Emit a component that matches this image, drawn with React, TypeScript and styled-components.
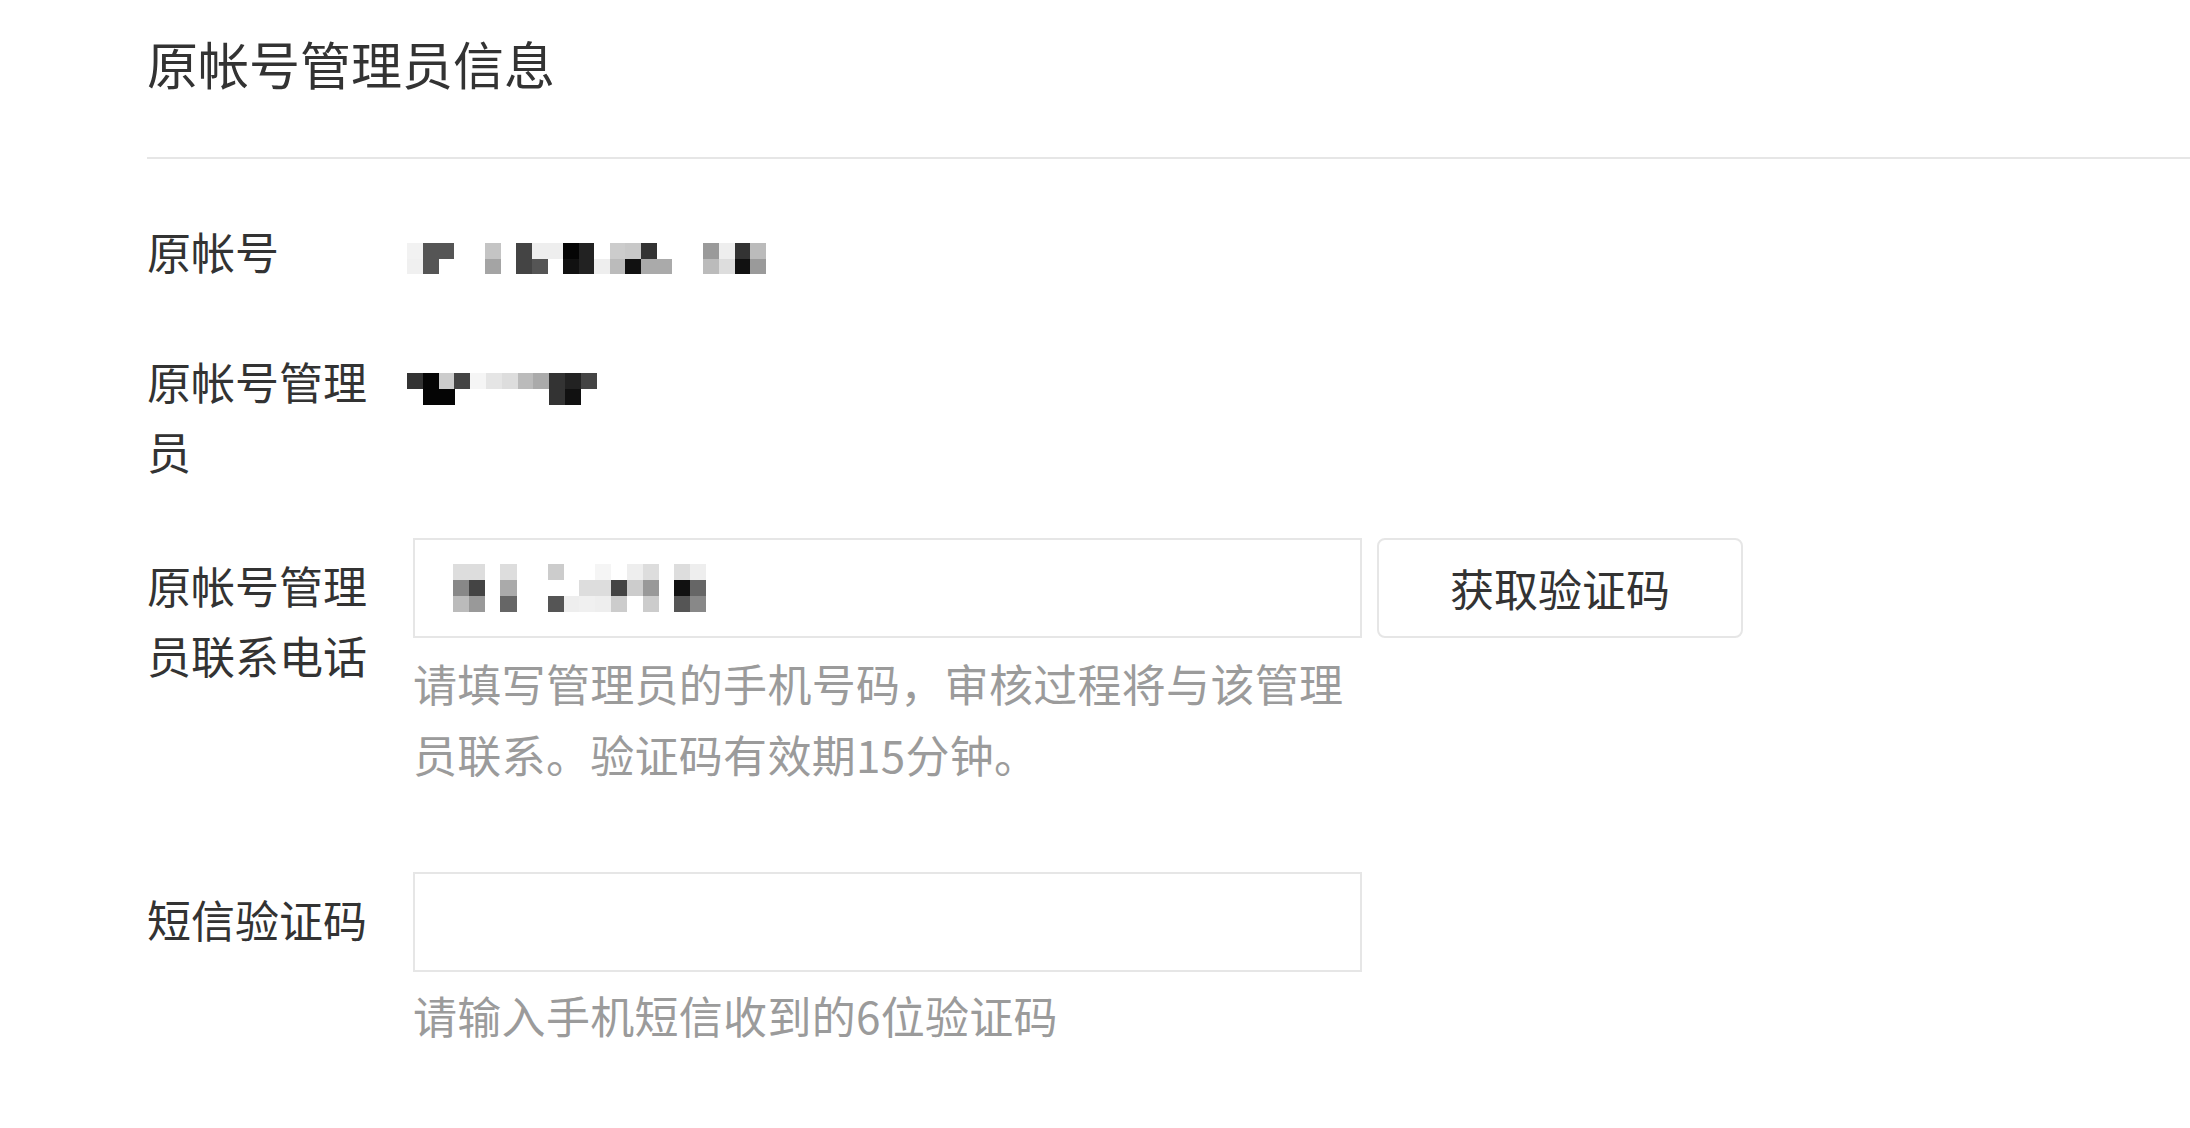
import React from "react";
import styled, { createGlobalStyle } from "styled-components";

const GlobalStyle = createGlobalStyle`
  html, body {
    margin: 0;
    padding: 0;
    background: #ffffff;
  }
  body {
    font-family: "Noto Sans CJK SC", "Noto Sans", sans-serif;
    color: #333333;
  }
`;

const Page = styled.div`
  width: 2190px;
  min-height: 1128px;
  background: #ffffff;
`;

const Header = styled.header`
  margin-left: 147px;
  padding: 38px 0 69px;
  border-bottom: 2px solid #e6e6e6;
`;

const Title = styled.h1`
  margin: 0;
  font-size: 51px;
  line-height: 50px;
  font-weight: 400;
  color: #333333;
`;

const Form = styled.div`
  padding-left: 147px;
`;

const Row = styled.div<{ $mt: number }>`
  display: flex;
  align-items: flex-start;
  margin-top: ${(p) => p.$mt}px;
`;

const Label = styled.div<{ $pt?: number }>`
  flex: none;
  width: 250px;
  margin-right: 16px;
  padding-top: ${(p) => p.$pt ?? 0}px;
  font-size: 44px;
  line-height: 70px;
  color: #333333;
`;

const Content = styled.div`
  display: flex;
  flex-direction: column;
`;

const StaticValue = styled.div`
  height: 70px;
  box-sizing: border-box;
  padding-top: 27px;
  margin-left: -6px;
`;

const FieldLine = styled.div`
  display: flex;
  gap: 15px;
`;

const Field = styled.div`
  width: 949px;
  height: 100px;
  box-sizing: border-box;
  border: 2px solid #e6e6e6;
  background: #ffffff;
  display: flex;
  align-items: center;
  padding-left: 38px;
`;

const TextInput = styled.input`
  display: block;
  width: 949px;
  height: 100px;
  margin: 0;
  box-sizing: border-box;
  border: 2px solid #e6e6e6;
  border-radius: 0;
  outline: none;
  padding: 0 38px;
  background: #ffffff;
  font-family: inherit;
  font-size: 44px;
  color: #333333;
`;

const CodeButton = styled.button`
  width: 366px;
  height: 100px;
  box-sizing: border-box;
  border: 2px solid #e6e6e6;
  border-radius: 8px;
  background: #ffffff;
  padding: 0;
  font-family: inherit;
  font-size: 44px;
  color: #333333;
  cursor: pointer;
`;

const Hint = styled.p<{ $mt: number }>`
  margin: ${(p) => p.$mt}px 0 0;
  width: 949px;
  font-size: 44px;
  line-height: 71px;
  letter-spacing: 0.3px;
  color: #9b9b9b;
`;

const MosaicSvg = styled.svg`
  display: block;
  flex: none;
`;

type MosaicProps = { rows: string[][]; cell: number };

const Mosaic: React.FC<MosaicProps> = ({ rows, cell }) => {
  const cols = Math.max(...rows.map((r) => r.length));
  const w = cols * cell;
  const h = rows.length * cell;
  return (
    <MosaicSvg width={w} height={h} viewBox={`0 0 ${w} ${h}`} shapeRendering="crispEdges">
      {rows.map((r, ri) =>
        r.map((c, ci) =>
          c ? (
            <rect
              key={`${ri}-${ci}`}
              x={ci * cell}
              y={ri * cell}
              width={cell + 0.3}
              height={cell + 0.3}
              fill={`#${c}`}
            />
          ) : null
        )
      )}
    </MosaicSvg>
  );
};

const accountMosaic = [
  ["f2f2f2", "555555", "555555", "", "", "c4c4c4", "", "444444", "eeeeee", "eeeeee", "050505", "222222", "", "cccccc", "c8c8c8", "333333", "", "", "", "9a9a9a", "eeeeee", "333333", "bbbbbb"],
  ["f0f0f0", "555555", "", "", "", "a4a4a4", "", "444444", "555555", "", "111111", "222222", "eeeeee", "bbbbbb", "111111", "aaaaaa", "aaaaaa", "", "", "bbbbbb", "dddddd", "111111", "9a9a9a"],
];

const adminMosaic = [
  ["333333", "050505", "cccccc", "444444", "f5f5f5", "e5e5e5", "dddddd", "bbbbbb", "aaaaaa", "333333", "222222", "444444"],
  ["", "050505", "050505", "", "", "", "", "", "", "333333", "111111", ""],
];

const phoneMosaic = [
  ["dddddd", "dddddd", "", "dddddd", "", "", "cccccc", "", "", "f5f5f5", "", "eeeeee", "dddddd", "", "dddddd", "eeeeee"],
  ["888888", "444444", "", "aaaaaa", "", "", "", "", "dddddd", "dddddd", "444444", "cccccc", "999999", "", "111111", "666666"],
  ["bbbbbb", "999999", "", "666666", "", "", "555555", "eeeeee", "f0f0f0", "eeeeee", "cccccc", "", "cccccc", "", "555555", "888888"],
];

export default function App() {
  return (
    <Page>
      <GlobalStyle />
      <Header>
        <Title>原帐号管理员信息</Title>
      </Header>
      <Form>
        <Row $mt={57}>
          <Label>原帐号</Label>
          <Content>
            <StaticValue>
              <Mosaic rows={accountMosaic} cell={15.6} />
            </StaticValue>
          </Content>
        </Row>
        <Row $mt={60}>
          <Label>原帐号管理员</Label>
          <Content>
            <StaticValue>
              <Mosaic rows={adminMosaic} cell={15.8} />
            </StaticValue>
          </Content>
        </Row>
        <Row $mt={52}>
          <Label $pt={12}>原帐号管理员联系电话</Label>
          <Content>
            <FieldLine>
              <Field>
                <Mosaic rows={phoneMosaic} cell={15.8} />
              </Field>
              <CodeButton type="button">获取验证码</CodeButton>
            </FieldLine>
            <Hint $mt={10}>请填写管理员的手机号码，审核过程将与该管理员联系。验证码有效期15分钟。</Hint>
          </Content>
        </Row>
        <Row $mt={82}>
          <Label $pt={12}>短信验证码</Label>
          <Content>
            <TextInput type="text" aria-label="短信验证码" />
            <Hint $mt={8}>请输入手机短信收到的6位验证码</Hint>
          </Content>
        </Row>
      </Form>
    </Page>
  );
}
